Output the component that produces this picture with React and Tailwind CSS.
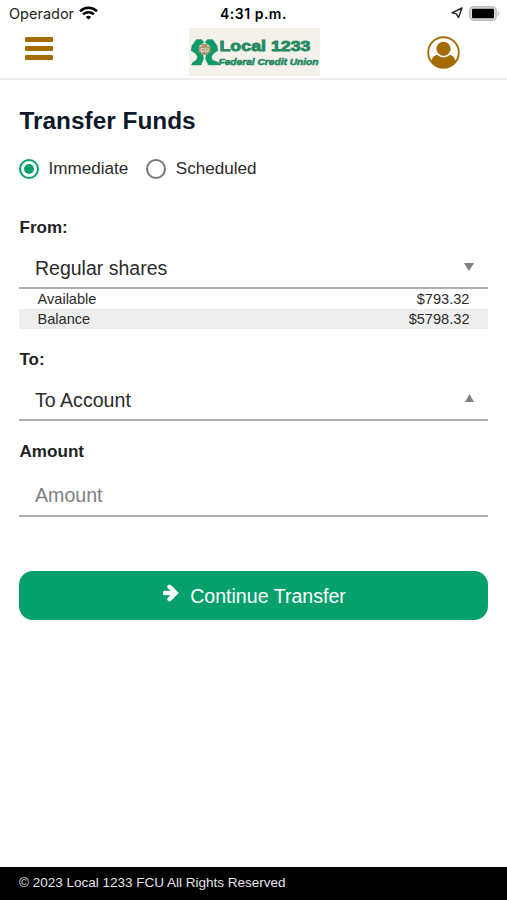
import React, { useState } from "react";

const StatusBar = () => (
  <div className="grid grid-cols-3 items-center h-7 pl-[9px] pr-[7px] font-['Inter',sans-serif] text-[14px] text-[#222]">
    <div className="flex items-center gap-[5px] pb-px">
      <span className="text-[14.5px]">Operador</span>
      <svg width="19" height="14" viewBox="0 0 19 14" fill="none" stroke="#000" className="mb-px">
        <path d="M1 5.2C5.8.6 13.2.6 18 5.2" strokeWidth="2.6" />
        <path d="M4.1 8.4C7.1 5.6 11.9 5.6 14.9 8.4" strokeWidth="2.4" />
        <path d="M6.8 10.9C8.4 9.5 10.6 9.5 12.2 10.9L9.5 13.6Z" fill="#000" stroke="none" />
      </svg>
    </div>
    <span className="text-center font-semibold text-black tracking-[0.5px] pb-[2px] pr-[2px]">4:31 p.m.</span>
    <div className="flex items-center justify-end gap-[6px] pb-[2px]">
      <svg width="12" height="12" viewBox="0 0 12 12" fill="none" stroke="#222" strokeWidth="1.4" strokeLinejoin="round">
        <path d="M11 1L1 5.800L5 6.600L7.500 10.500Z" />
      </svg>
      <svg width="31" height="15" viewBox="0 0 31 15">
        <rect x=".8" y=".8" width="26.4" height="13.4" rx="4" fill="#ddd" stroke="#bbb" strokeWidth="1.5" />
        <rect x="3" y="2.8" width="22" height="9.4" rx="1" fill="#000" />
        <path d="M28.8 5v5c2-.8 2-4.200 0-5z" fill="#bbb" />
      </svg>
    </div>
  </div>
);

const Logo = () => (
  <svg width="131" height="48" viewBox="0 0 131 48">
    <rect width="131" height="48" fill="#f3f1ea" />
    <g fill="#0a9b68" stroke="#3d8a68" strokeWidth=".4">
      <path d="M7.500 11.500H12.500L15 14.500L10 18V23L14 26.500L14.500 31L12 37H2.500L3.500 34.500L7.500 32L8.500 28.500L6.500 25.500L2 22.500L3 17.500Z" />
      <path d="M18.500 11.500H23.500L28 17.500L29 22.500L24.500 25.500L22.500 28.500L23.500 32L29.500 34.500V37H19.500L16.500 31L17 26.500L21 23V18L16 14.500Z" />
    </g>
    <path d="M12.500 16H18.500V18.500H21.500V24.500H18.500V27H12.500V24.500H9.500V18.500H12.500Z" fill="#ad9674" />
    <text x="15.500" y="23.900" textAnchor="middle" fontSize="6" fontWeight="700" fill="#eee8dc" fontFamily="Liberation Sans, sans-serif">CU</text>
    <g fill="#0a9b68" stroke="#2f8461" fontWeight="700" fontFamily="Liberation Sans, sans-serif">
      <text x="30.500" y="22.500" fontSize="15.500" textLength="91" lengthAdjust="spacingAndGlyphs" strokeWidth=".9">Local 1233</text>
      <text x="29.500" y="36.800" fontSize="9.500" fontStyle="italic" textLength="100" lengthAdjust="spacingAndGlyphs" strokeWidth=".6">Federal Credit Union</text>
    </g>
  </svg>
);

const Header = () => (
  <header className="flex items-start justify-between h-[52px] pl-[25px] pr-[47px] border-b-2 border-[#eee]">
    <button aria-label="Menu" className="flex flex-col gap-1 w-[28px] pt-[9px]">
      <span className="h-[5px] w-full rounded-[1px] bg-[#a36c04]" />
      <span className="h-[5px] w-full rounded-[1px] bg-[#a36c04]" />
      <span className="h-[5px] w-full rounded-[1px] bg-[#a36c04]" />
    </button>
    <div className="ml-[28px]">
      <Logo />
    </div>
    <button aria-label="Profile" className="pt-2">
      <svg width="33" height="33" viewBox="0 0 33 33">
        <circle cx="16.500" cy="16.500" r="15.300" fill="none" stroke="#a36c04" strokeWidth="1.900" />
        <circle cx="16.500" cy="12.800" r="7.100" fill="#a36c04" />
        <path d="M4.500 25C5.200 21.200 7.600 19 10.500 19C14 22.300 19 22.300 22.500 19C25.400 19 27.800 21.200 28.500 25C26 29.500 21.500 32 16.500 32C11.500 32 7 29.500 4.500 25Z" fill="#a36c04" />
      </svg>
    </button>
  </header>
);

const Radio = ({ label, checked, onChange }) => (
  <label className="flex items-center gap-[9.5px] text-[17.1px] leading-5">
    <input type="radio" name="when" checked={checked} onChange={onChange} className="sr-only" />
    <span
      className={
        checked
          ? "flex items-center justify-center size-5 rounded-full border-[2.5px] border-[#079f6b]"
          : "flex items-center justify-center size-5 rounded-full border-[2.5px] border-[#777]"
      }
    >
      {checked && <span className="size-[10px] rounded-full bg-[#079f6b]" />}
    </span>
    {label}
  </label>
);

const App = () => {
  const [when, setWhen] = useState("Immediate");
  const [amount, setAmount] = useState("");

  return (
    <div className="flex flex-col h-screen bg-white text-[#2b2b2b] font-['Liberation_Sans',Arial,sans-serif]">
      <StatusBar />
      <Header />

      <main className="flex-1 px-[19px] pt-[25px]">
        <h1 className="pl-[0.5px] text-[24.4px] leading-8 font-bold text-[#10192b]">Transfer Funds</h1>

        <div className="flex gap-[18px] mt-[22px]">
          <Radio label="Immediate" checked={when === "Immediate"} onChange={() => setWhen("Immediate")} />
          <Radio label="Scheduled" checked={when === "Scheduled"} onChange={() => setWhen("Scheduled")} />
        </div>

        {/* From account */}
        <h2 className="mt-[39px] pl-[0.5px] text-[17px] leading-5 font-bold text-[#222]">From:</h2>
        <button className="flex items-center justify-between w-full h-[51px] pl-4 pr-[14px] pt-[13px] border-b-2 border-[#b0b0b0] text-[19.5px]">
          <span>Regular shares</span>
          <svg width="10" height="8" viewBox="0 0 10 8" className="mb-1">
            <path d="M0 0H10L5 8Z" fill="#808080" />
          </svg>
        </button>
        <dl className="text-[14.6px] leading-5">
          <div className="flex justify-between pl-[18.5px] pr-[18.5px] h-5">
            <dt>Available</dt>
            <dd>$793.32</dd>
          </div>
          <div className="flex justify-between pl-[18.5px] pr-[18.5px] h-5 bg-[#eee]">
            <dt>Balance</dt>
            <dd>$5798.32</dd>
          </div>
        </dl>

        {/* To account */}
        <h2 className="mt-[21px] pl-[0.5px] text-[17px] leading-5 font-bold text-[#222]">To:</h2>
        <button className="flex items-center justify-between w-full h-[51px] pl-4 pr-[14px] pt-[13px] border-b-2 border-[#b0b0b0] text-[19.6px]">
          <span>To Account</span>
          <svg width="9" height="8" viewBox="0 0 9 8" className="mb-[6px]">
            <path d="M0 8H9L4.500 0Z" fill="#808080" />
          </svg>
        </button>

        {/* Amount */}
        <label htmlFor="amount" className="block mt-[21px] pl-[0.5px] text-[17.1px] leading-5 font-bold text-[#222]">
          Amount
        </label>
        <input
          id="amount"
          placeholder="Amount"
          value={amount}
          onChange={(e) => setAmount(e.target.value)}
          className="block w-full h-[55px] pl-4 pt-[13px] border-b-2 border-[#b0b0b0] text-[19.6px] placeholder:text-[#808080] focus:outline-none"
        />

        <button className="flex items-center justify-center gap-[11px] w-full h-[49px] mt-[54px] pt-[2px] rounded-[14px] bg-[#05a06c] text-white text-[19.6px]">
          <svg width="18" height="18" viewBox="0 0 18 18" className="mb-[7px]" fill="none" stroke="#fff" strokeWidth="4.400">
            <path d="M2.200 9H14" />
            <path d="M8.500 2.800L14.700 9L8.500 15.200" strokeLinecap="round" />
          </svg>
          <span>Continue Transfer</span>
        </button>
      </main>

      <footer className="h-[33px] pl-[19px] bg-black text-[#e5e5e5] text-[13.5px] leading-[31px]">
        © 2023 Local 1233 FCU All Rights Reserved
      </footer>
    </div>
  );
};

export default App;
